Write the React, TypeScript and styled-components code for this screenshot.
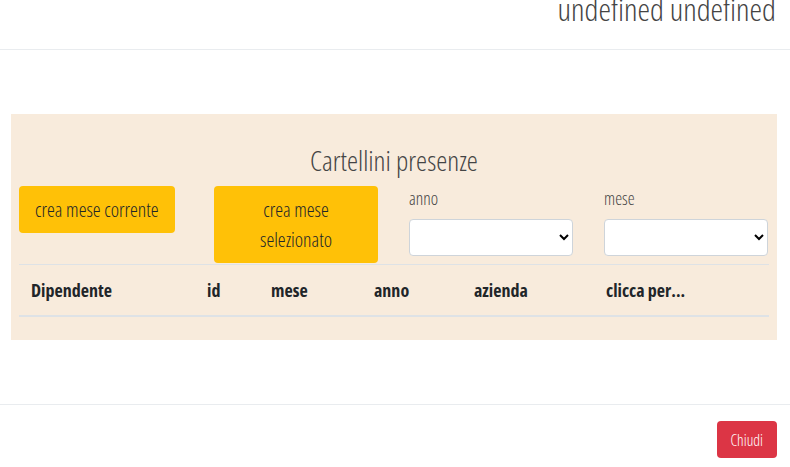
import styled, { createGlobalStyle } from "styled-components";

const GlobalStyle = createGlobalStyle`
  html, body {
    margin: 0;
    padding: 0;
    background: #ffffff;
  }
  body {
    font-family: "Open Sans", "Liberation Sans Narrow", "DejaVu Sans Condensed", sans-serif;
    font-stretch: 75%;
    color: #212529;
  }
`;

const Header = styled.header`
  height: 49px;
  border-bottom: 1px solid #e9ecef;
  display: flex;
  justify-content: flex-end;
  align-items: flex-start;
  padding: 0 14px;
  overflow: hidden;
`;

const Title = styled.h4`
  margin: -12px 0 0;
  font-size: 31.7px;
  font-weight: 300;
  line-height: 42px;
  color: #444;
`;

const Body = styled.main`
  padding: 64px 13px 64px 11px;
`;

const Panel = styled.section`
  background: #f8ebdc;
  padding: 27px 8px 23px;
`;

const PanelTitle = styled.h3`
  margin: 0 0 7px;
  text-align: center;
  font-size: 28px;
  font-weight: 300;
  line-height: 38px;
  color: #444;
`;

const Controls = styled.div`
  display: grid;
  grid-template-columns: repeat(4, 164px);
  column-gap: 31px;
  align-items: start;
`;

const Button = styled.button<{ $variant: "warning" | "danger"; $size?: "lg"; $full?: boolean }>`
  font-family: inherit;
  font-stretch: 75%;
  font-weight: 300;
  font-size: ${(p) => (p.$size === "lg" ? "19.8px" : "15.5px")};
  line-height: ${(p) => (p.$size === "lg" ? "30px" : "24px")};
  padding: ${(p) => (p.$size === "lg" ? "8.5px 16px" : "6.5px 14px")};
  border: none;
  border-radius: 4px;
  cursor: pointer;
  width: ${(p) => (p.$full ? "100%" : "auto")};
  justify-self: start;
  background: ${(p) => (p.$variant === "warning" ? "#ffc107" : "#dc3545")};
  color: ${(p) => (p.$variant === "warning" ? "#212529" : "#ffffff")};
`;

const Field = styled.label`
  display: flex;
  flex-direction: column;
  gap: 9px;
  font-size: 17.5px;
  font-weight: 300;
  color: #444;
  line-height: 24px;
`;

const Select = styled.select`
  height: 37px;
  width: 100%;
  background: #fff;
  border: 1px solid #ced4da;
  border-radius: 4px;
  font-family: inherit;
`;

const Table = styled.table`
  width: 100%;
  border-collapse: collapse;
  margin-top: 1px;
  border-top: 1px solid #dee2e6;
`;

const Th = styled.th<{ $w?: number }>`
  text-align: left;
  font-weight: 700;
  font-size: 18px;
  padding: 12px;
  height: 26px;
  line-height: 26px;
  width: ${(p) => (p.$w ? `${p.$w}px` : "auto")};
  border-bottom: 2px solid #dee2e6;
  box-sizing: content-box;
`;

const Footer = styled.footer`
  border-top: 1px solid #e9ecef;
  display: flex;
  justify-content: flex-end;
  padding: 16px 13px;
`;

const columns: { label: string; w?: number }[] = [
  { label: "Dipendente", w: 152 },
  { label: "id", w: 40 },
  { label: "mese", w: 79 },
  { label: "anno", w: 76 },
  { label: "azienda", w: 108 },
  { label: "clicca per..." },
];

export default function App() {
  return (
    <>
      <GlobalStyle />
      <Header>
        <Title>undefined undefined</Title>
      </Header>
      <Body>
        <Panel>
          <PanelTitle>Cartellini presenze</PanelTitle>
          <Controls>
            <Button $variant="warning" $size="lg">
              crea mese corrente
            </Button>
            <Button $variant="warning" $size="lg" $full>
              crea mese selezionato
            </Button>
            <Field>
              <span>anno</span>
              <Select />
            </Field>
            <Field>
              <span>mese</span>
              <Select />
            </Field>
          </Controls>
          <Table>
            <thead>
              <tr>
                {columns.map((c) => (
                  <Th key={c.label} $w={c.w}>
                    {c.label}
                  </Th>
                ))}
              </tr>
            </thead>
          </Table>
        </Panel>
      </Body>
      <Footer>
        <Button $variant="danger">Chiudi</Button>
      </Footer>
    </>
  );
}
